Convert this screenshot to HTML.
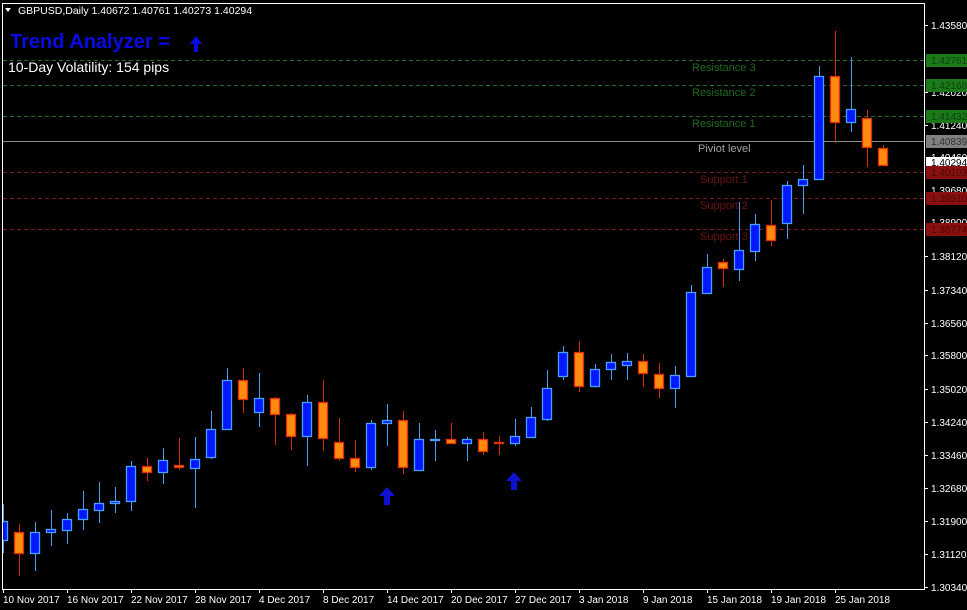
<!DOCTYPE html>
<html><head><meta charset="utf-8"><style>
html,body{margin:0;padding:0;background:#000;width:967px;height:610px;overflow:hidden}
svg{display:block}
text{font-family:"Liberation Sans",sans-serif}
.bw{stroke:#4a9cff;fill:none}
.bb rect{fill:#0018ff;stroke:#4a9cff;stroke-width:1.3}
.rw{stroke:#d42a0a;fill:none}
.rb rect{fill:#ff8c10;stroke:#e0300a;stroke-width:1.3}
</style></head><body>
<svg width="967" height="610" viewBox="0 0 967 610" xmlns="http://www.w3.org/2000/svg">
<rect width="967" height="610" fill="#000"/>
<defs><clipPath id="c"><rect x="3" y="4" width="921" height="585"/></clipPath></defs>
<g stroke-width="1" stroke-dasharray="4,3" fill="none">
<line x1="3" y1="60.5" x2="924" y2="60.5" stroke="#2a6a2a"/>
<line x1="3" y1="85.5" x2="924" y2="85.5" stroke="#2a6a2a"/>
<line x1="3" y1="116.5" x2="924" y2="116.5" stroke="#2a6a2a"/>
<line x1="3" y1="172.5" x2="924" y2="172.5" stroke="#7a1a1a"/>
<line x1="3" y1="198.5" x2="924" y2="198.5" stroke="#7a1a1a"/>
<line x1="3" y1="229.5" x2="924" y2="229.5" stroke="#7a1a1a"/>
</g>
<line x1="3" y1="141.5" x2="924" y2="141.5" stroke="#8a8a8a"/>
<g font-size="11">
<text x="692" y="71" fill="#1f6a1f">Resistance 3</text>
<text x="692" y="96" fill="#1f6a1f">Resistance 2</text>
<text x="692" y="127" fill="#1f6a1f">Resistance 1</text>
<text x="698" y="152" fill="#a0a0a0">Piviot level</text>
<text x="700" y="183" fill="#6e1414">Support 1</text>
<text x="700" y="209" fill="#6e1414">Support 2</text>
<text x="700" y="240" fill="#6e1414">Support 3</text>
</g>
<g clip-path="url(#c)">
<path class="bw" d="M3.5 504V553M35.5 522V571M51.5 510V546M67.5 513V544M83.5 491V530M99.5 482V523M115.5 487V513M131.5 461V511M163.5 448V484M195.5 437V508M211.5 411V459M227.5 368V430M259.5 373V427M307.5 395V466M371.5 420V470M387.5 404V446M419.5 423V470M435.5 430V461M467.5 437V461M515.5 419V446M531.5 407V437M547.5 370V421M563.5 346V380M595.5 364V387M611.5 354V380M627.5 353V380M675.5 366V408M691.5 285V377M707.5 254V294M739.5 202V281M755.5 214V261M787.5 181V239M803.5 165V214M819.5 66V179M851.5 57V132"/>
<path class="rw" d="M19.5 524V576M147.5 458V481M179.5 438V470M243.5 368V413M275.5 397V445M291.5 413V450M323.5 380V451M339.5 418V461M355.5 440V472M403.5 411V474M451.5 423V443M483.5 432V455M499.5 436V455M579.5 341V392M643.5 354V387M659.5 363V398M723.5 259V287M771.5 200V246M835.5 31V143M867.5 110V167M883.5 145V166"/>
<g class="bb">
<rect x="-1.5" y="521.5" width="9" height="19"/>
<rect x="30.5" y="532.5" width="9" height="21"/>
<rect x="46.5" y="529.5" width="9" height="3"/>
<rect x="62.5" y="519.5" width="9" height="11"/>
<rect x="78.5" y="509.5" width="9" height="10"/>
<rect x="94.5" y="503.5" width="9" height="7"/>
<rect x="110.5" y="501.5" width="9" height="2"/>
<rect x="126.5" y="466.5" width="9" height="35"/>
<rect x="158.5" y="460.5" width="9" height="12"/>
<rect x="190.5" y="459.5" width="9" height="9"/>
<rect x="206.5" y="429.5" width="9" height="28"/>
<rect x="222.5" y="380.5" width="9" height="49"/>
<rect x="254.5" y="398.5" width="9" height="14"/>
<rect x="302.5" y="402.5" width="9" height="34"/>
<rect x="366.5" y="423.5" width="9" height="44"/>
<rect x="382.5" y="420.5" width="9" height="3"/>
<rect x="414.5" y="439.5" width="9" height="31"/>
<rect x="430.5" y="439.5" width="9" height="1"/>
<rect x="462.5" y="439.5" width="9" height="4"/>
<rect x="510.5" y="436.5" width="9" height="7"/>
<rect x="526.5" y="417.5" width="9" height="20"/>
<rect x="542.5" y="388.5" width="9" height="31"/>
<rect x="558.5" y="352.5" width="9" height="24"/>
<rect x="590.5" y="369.5" width="9" height="17"/>
<rect x="606.5" y="362.5" width="9" height="7"/>
<rect x="622.5" y="361.5" width="9" height="4"/>
<rect x="670.5" y="375.5" width="9" height="13"/>
<rect x="686.5" y="292.5" width="9" height="84"/>
<rect x="702.5" y="267.5" width="9" height="26"/>
<rect x="734.5" y="250.5" width="9" height="19"/>
<rect x="750.5" y="224.5" width="9" height="27"/>
<rect x="782.5" y="185.5" width="9" height="38"/>
<rect x="798.5" y="179.5" width="9" height="6"/>
<rect x="814.5" y="76.5" width="9" height="103"/>
<rect x="846.5" y="109.5" width="9" height="13"/>
</g>
<g class="rb">
<rect x="14.5" y="532.5" width="9" height="21"/>
<rect x="142.5" y="466.5" width="9" height="6"/>
<rect x="174.5" y="465.5" width="9" height="2"/>
<rect x="238.5" y="380.5" width="9" height="19"/>
<rect x="270.5" y="398.5" width="9" height="16"/>
<rect x="286.5" y="414.5" width="9" height="22"/>
<rect x="318.5" y="402.5" width="9" height="36"/>
<rect x="334.5" y="442.5" width="9" height="16"/>
<rect x="350.5" y="458.5" width="9" height="9"/>
<rect x="398.5" y="420.5" width="9" height="47"/>
<rect x="446.5" y="439.5" width="9" height="4"/>
<rect x="478.5" y="439.5" width="9" height="12"/>
<rect x="494.5" y="442.5" width="9" height="1"/>
<rect x="574.5" y="352.5" width="9" height="34"/>
<rect x="638.5" y="361.5" width="9" height="12"/>
<rect x="654.5" y="374.5" width="9" height="14"/>
<rect x="718.5" y="262.5" width="9" height="6"/>
<rect x="766.5" y="225.5" width="9" height="15"/>
<rect x="830.5" y="76.5" width="9" height="46"/>
<rect x="862.5" y="118.5" width="9" height="29"/>
<rect x="878.5" y="148.5" width="9" height="17"/>
</g>
</g>
<g stroke="#fff" stroke-width="1" fill="none">
<line x1="2.5" y1="3" x2="2.5" y2="589"/>
<line x1="2" y1="3.5" x2="925" y2="3.5"/>
<line x1="924.5" y1="3" x2="924.5" y2="589"/>
<line x1="2" y1="589.5" x2="925" y2="589.5"/>
</g>
<g font-size="10" fill="#fff">
<text x="931" y="29">1.43580</text>
<text x="931" y="96">1.42020</text>
<text x="931" y="129">1.41240</text>
<text x="931" y="161">1.40460</text>
<text x="931" y="194">1.39680</text>
<text x="931" y="226">1.38900</text>
<text x="931" y="260">1.38120</text>
<text x="931" y="294">1.37340</text>
<text x="931" y="327">1.36560</text>
<text x="931" y="359">1.35800</text>
<text x="931" y="393">1.35020</text>
<text x="931" y="426">1.34240</text>
<text x="931" y="459">1.33460</text>
<text x="931" y="492">1.32680</text>
<text x="931" y="525">1.31900</text>
<text x="931" y="558">1.31120</text>
<text x="931" y="591">1.30340</text>
</g>
<g stroke="#fff"><line x1="925" y1="25.5" x2="928" y2="25.5"/><line x1="925" y1="92.5" x2="928" y2="92.5"/><line x1="925" y1="125.5" x2="928" y2="125.5"/><line x1="925" y1="256.5" x2="928" y2="256.5"/><line x1="925" y1="290.5" x2="928" y2="290.5"/><line x1="925" y1="323.5" x2="928" y2="323.5"/><line x1="925" y1="355.5" x2="928" y2="355.5"/><line x1="925" y1="389.5" x2="928" y2="389.5"/><line x1="925" y1="422.5" x2="928" y2="422.5"/><line x1="925" y1="455.5" x2="928" y2="455.5"/><line x1="925" y1="488.5" x2="928" y2="488.5"/><line x1="925" y1="521.5" x2="928" y2="521.5"/><line x1="925" y1="554.5" x2="928" y2="554.5"/><line x1="925" y1="587.5" x2="928" y2="587.5"/></g>
<g font-size="10">
<rect x="926" y="54" width="41" height="13" fill="#1a7a1a"/><text x="931" y="64" fill="#0f3f0f">1.42761</text>
<rect x="926" y="79" width="41" height="13" fill="#1a7a1a"/><text x="931" y="89" fill="#0f3f0f">1.42168</text>
<rect x="926" y="110" width="41" height="13" fill="#1a7a1a"/><text x="931" y="120" fill="#0f3f0f">1.41432</text>
<rect x="926" y="135" width="41" height="13" fill="#808080"/><text x="931" y="145" fill="#303030">1.40839</text>
<rect x="926" y="157" width="41" height="9" fill="#fff"/><text x="931" y="166" fill="#000">1.40294</text>
<rect x="926" y="166" width="41" height="13" fill="#8a1010"/><text x="931" y="176" fill="#4a0808">1.40103</text>
<rect x="926" y="192" width="41" height="13" fill="#8a1010"/><text x="931" y="202" fill="#4a0808">1.39510</text>
<rect x="926" y="223" width="41" height="13" fill="#8a1010"/><text x="931" y="233" fill="#4a0808">1.38774</text>
</g>
<g stroke="#fff"><line x1="3.5" y1="589" x2="3.5" y2="593"/><line x1="67.5" y1="589" x2="67.5" y2="593"/><line x1="131.5" y1="589" x2="131.5" y2="593"/><line x1="195.5" y1="589" x2="195.5" y2="593"/><line x1="259.5" y1="589" x2="259.5" y2="593"/><line x1="323.5" y1="589" x2="323.5" y2="593"/><line x1="387.5" y1="589" x2="387.5" y2="593"/><line x1="451.5" y1="589" x2="451.5" y2="593"/><line x1="515.5" y1="589" x2="515.5" y2="593"/><line x1="579.5" y1="589" x2="579.5" y2="593"/><line x1="643.5" y1="589" x2="643.5" y2="593"/><line x1="707.5" y1="589" x2="707.5" y2="593"/><line x1="771.5" y1="589" x2="771.5" y2="593"/><line x1="835.5" y1="589" x2="835.5" y2="593"/></g>
<g font-size="10" fill="#fff">
<text x="3" y="603">10 Nov 2017</text><text x="67" y="603">16 Nov 2017</text><text x="131" y="603">22 Nov 2017</text><text x="195" y="603">28 Nov 2017</text><text x="259" y="603">4 Dec 2017</text><text x="323" y="603">8 Dec 2017</text><text x="387" y="603">14 Dec 2017</text><text x="451" y="603">20 Dec 2017</text><text x="515" y="603">27 Dec 2017</text><text x="579" y="603">3 Jan 2018</text><text x="643" y="603">9 Jan 2018</text><text x="707" y="603">15 Jan 2018</text><text x="771" y="603">19 Jan 2018</text><text x="835" y="603">25 Jan 2018</text>
</g>
<path d="M5 8 L11 8 L8 12 Z" fill="#fff"/>
<text x="18" y="14" font-size="10.5" fill="#fff">GBPUSD,Daily  1.40672 1.40761 1.40273 1.40294</text>
<text x="10" y="48" font-size="20" font-weight="bold" fill="#0a0ae6">Trend Analyzer =</text>
<path d="M196 36 L202 44 L198 44 L198 52 L194 52 L194 44 L190 44 Z" fill="#0a0ae6"/>
<text x="8" y="72" font-size="14" fill="#fff">10-Day Volatility: 154 pips</text>
<path d="M387 487 L395 496 L390 496 L390 505 L384 505 L384 496 L379 496 Z" fill="#1010d0"/>
<path d="M514 472 L522 481 L517 481 L517 490 L511 490 L511 481 L506 481 Z" fill="#1010d0"/>
</svg>
</body></html>
